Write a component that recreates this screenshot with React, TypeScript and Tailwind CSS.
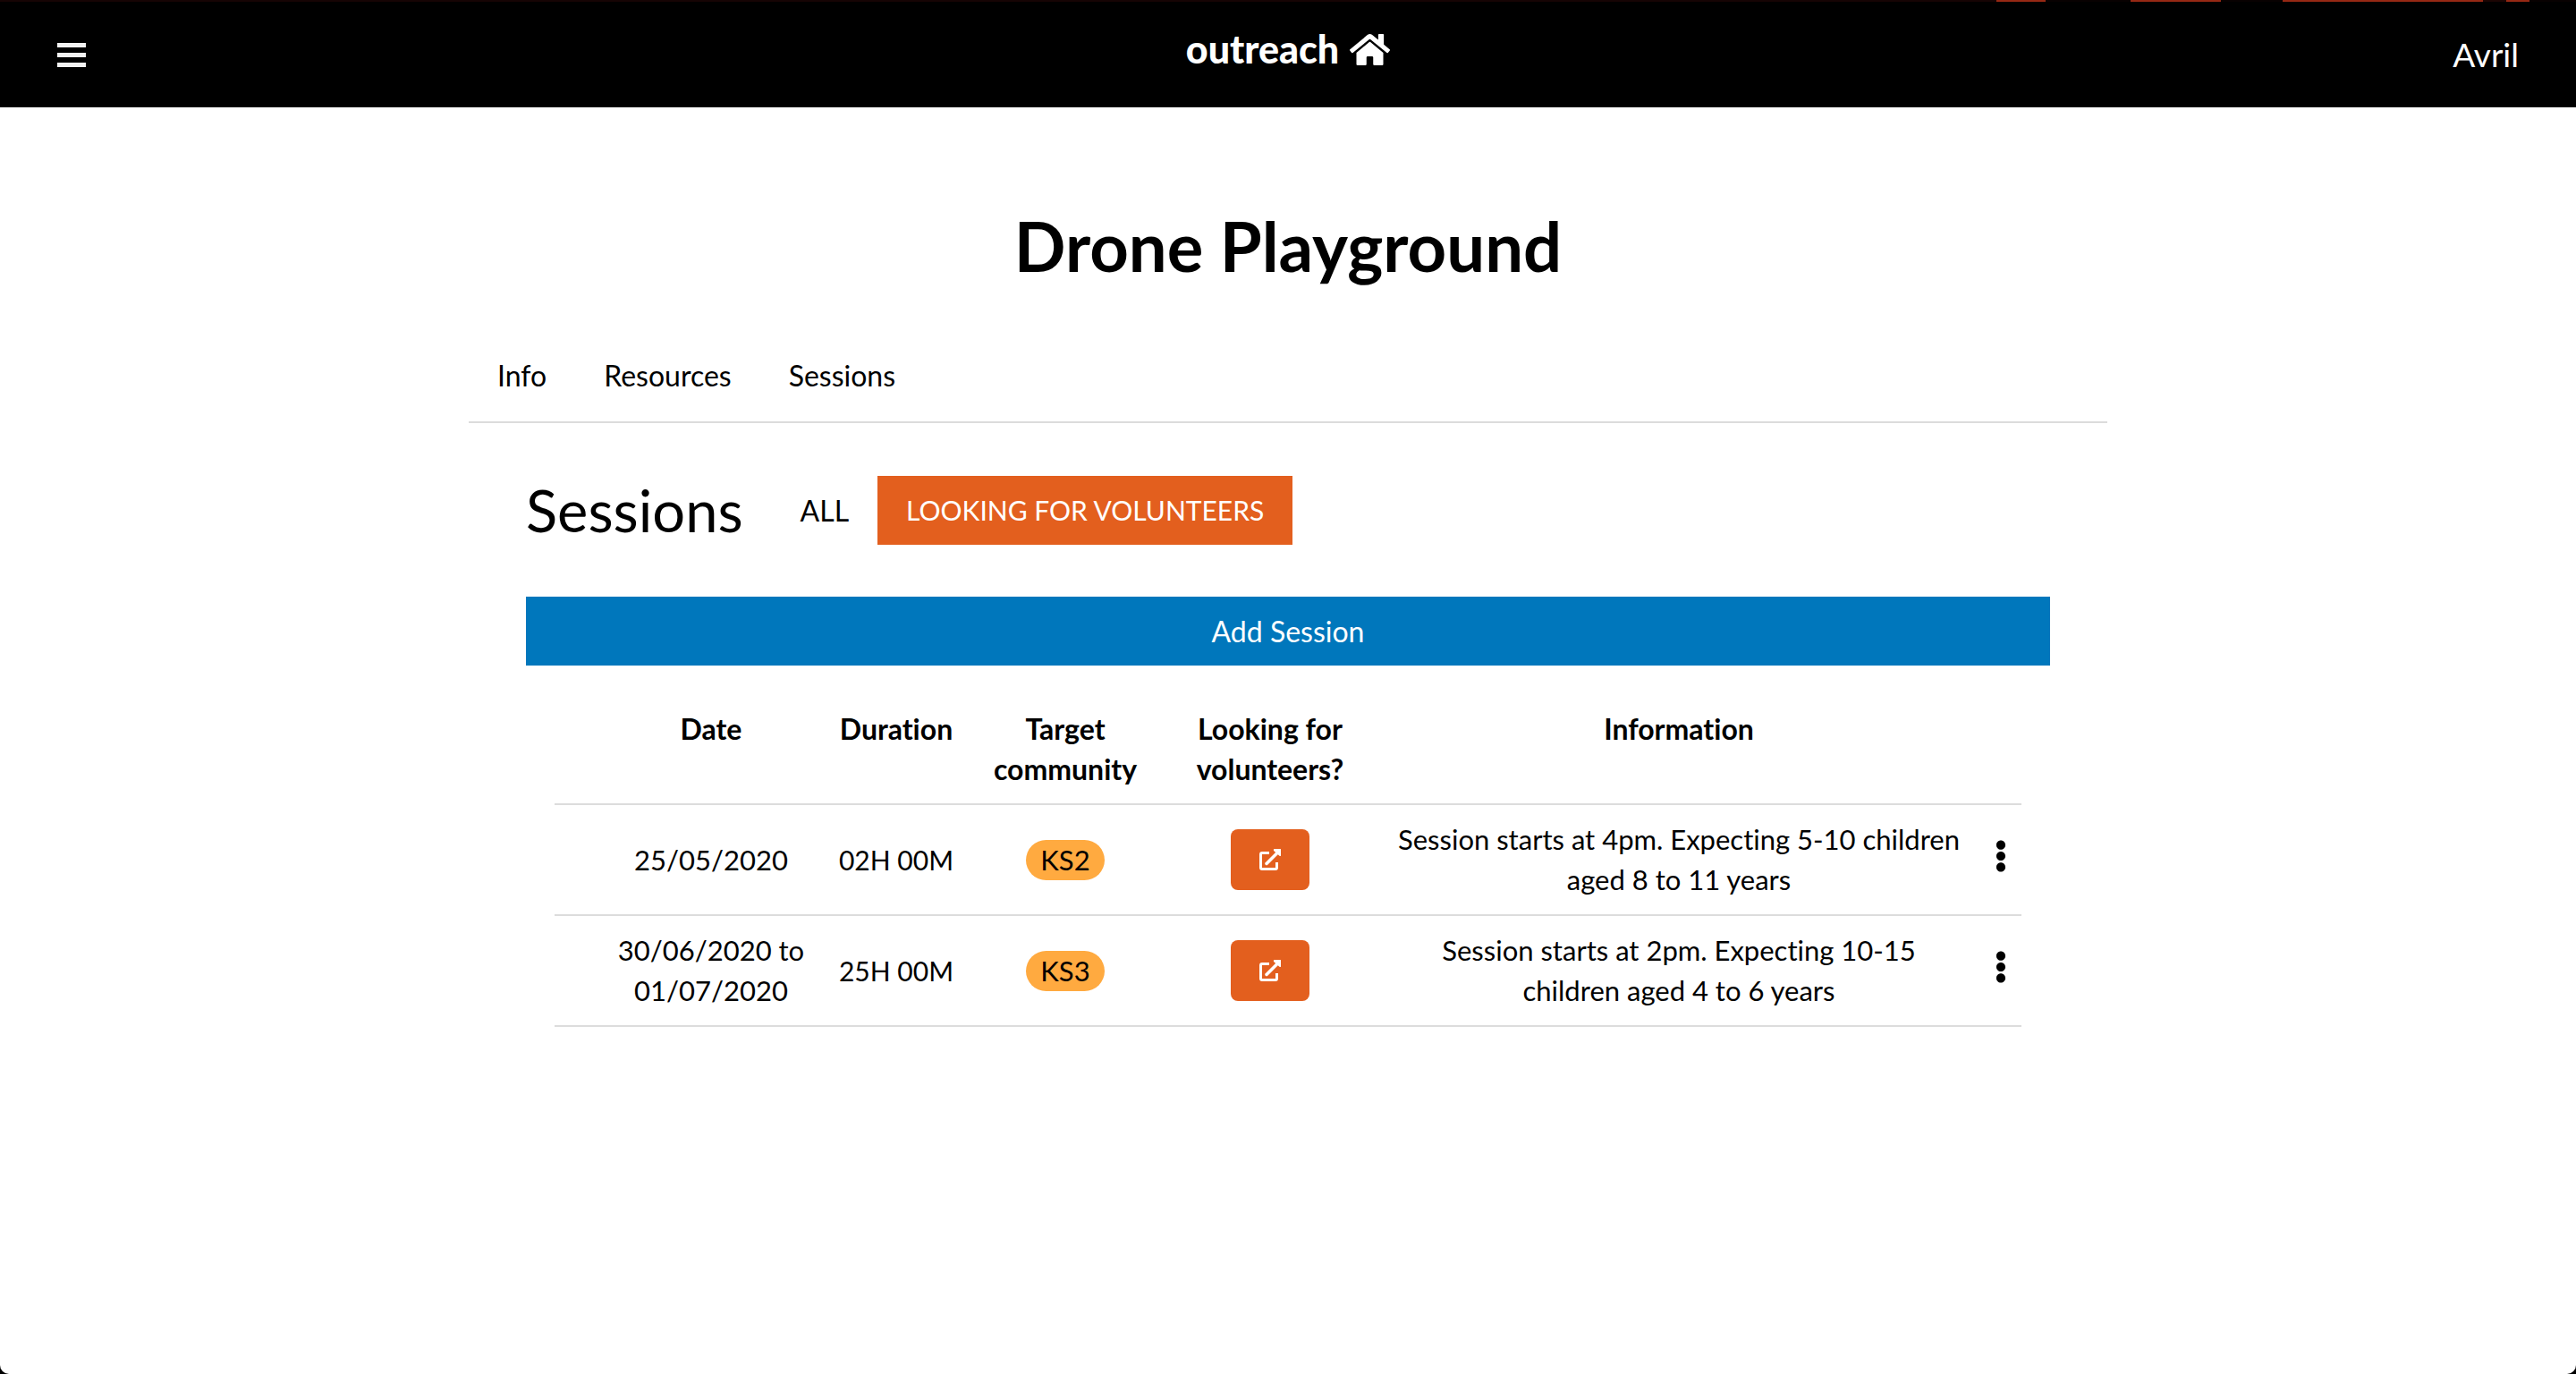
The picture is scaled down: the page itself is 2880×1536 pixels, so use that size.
import { FaHome, FaEllipsisV } from "react-icons/fa";

const sessions = [
  { date: "25/05/2020", duration: "02H 00M", target: "KS2", info: "Session starts at 4pm. Expecting 5-10 children aged 8 to 11 years" },
  { date: "30/06/2020 to 01/07/2020", duration: "25H 00M", target: "KS3", info: "Session starts at 2pm. Expecting 10-15 children aged 4 to 6 years" },
];

function OpenIcon() {
  return (
    <svg viewBox="0 0 24 24" className="size-6" fill="none" stroke="currentColor" strokeWidth="3" aria-hidden="true">
      <path d="M11 4.5H3Q1.5 4.5 1.5 6v15Q1.5 22.500 3 22.500h15q1.500 0 1.500-1.500v-6" />
      <path d="M8 16.500 20 4.500" strokeWidth="3.500" strokeLinecap="round" />
      <path d="M16.500 0H23.500Q24 0 24 .5V7.500q-.5 1-1.500.2L16 2Q15.500.5 16.500 0Z" fill="currentColor" stroke="none" />
    </svg>
  );
}

function Header() {
  return (
    <header>
      <div className="h-[2px] bg-[linear-gradient(to_right,#160404_77.5%,#962814_77.5%_79.4%,#080101_79.4%_82.7%,#962814_82.7%_86.2%,#080101_86.2%_88.6%,#962814_88.6%_96.4%,#1c0503_96.4%_97.3%,#962814_97.3%_98.2%,#080101_98.2%)]" />
      <div className="grid h-[118px] grid-cols-3 items-center bg-black px-16 text-white">
        <button type="button" aria-label="Open menu" className="flex w-8 flex-col gap-[6px] justify-self-start">
          <span className="h-[5px] w-full bg-[#f2f2f2]" />
          <span className="h-[5px] w-full bg-[#f2f2f2]" />
          <span className="h-[5px] w-full bg-[#f2f2f2]" />
        </button>
        <a href="#home" className="mb-3 flex items-center gap-3 justify-self-center text-[43px] leading-[60px] font-black">
          outreach
          <FaHome className="size-[45px]" aria-hidden="true" />
        </a>
        <a href="#account" className="justify-self-end text-[37px] leading-[54px]">Avril</a>
      </div>
    </header>
  );
}

function SessionsTable() {
  return (
    <table className="w-full table-fixed text-center text-[31px] leading-[45px]">
      <colgroup>
        <col className="w-[48px]" />
        <col className="w-[254px]" />
        <col className="w-[160px]" />
        <col className="w-[218px]" />
        <col className="w-[240px]" />
        <col />
        <col className="w-[46px]" />
      </colgroup>
      <thead className="text-[32px] leading-[45px]">
        <tr className="border-b-2 border-[#dcdcdc] align-top">
          <td />
          <th scope="col" className="py-4">Date</th>
          <th scope="col" className="py-4">Duration</th>
          <th scope="col" className="py-4">Target community</th>
          <th scope="col" className="px-4 py-4">Looking for volunteers?</th>
          <th scope="col" className="py-4">Information</th>
          <td />
        </tr>
      </thead>
      <tbody>
        {sessions.map((s) => (
          <tr key={s.date} className="border-b-2 border-[#dcdcdc]">
            <td />
            <td className="px-4 py-4">{s.date}</td>
            <td className="text-[30px] leading-[45px]">{s.duration}</td>
            <td className="py-4">
              <span className="inline-block rounded-3xl bg-[#ffaa40] px-4">{s.target}</span>
            </td>
            <td className="py-4">
              <a href="#volunteer" aria-label="Volunteer for this session" className="inline-flex h-[68px] w-[88px] items-center justify-center rounded-lg bg-[#e35f1e] align-middle text-white">
                <OpenIcon />
              </a>
            </td>
            <td className="px-4 py-4">{s.info}</td>
            <td>
              <button type="button" aria-label="Session options" className="mx-auto mb-2 block">
                <FaEllipsisV className="size-9" />
              </button>
            </td>
          </tr>
        ))}
      </tbody>
    </table>
  );
}

export default function App() {
  return (
    <div className="bg-black">
      <div className="min-h-screen rounded-b-[10px] bg-white font-['Lato',sans-serif] text-[32px] leading-[45px] text-black [font-variant-ligatures:none]">
        <Header />
        <main className="mx-auto max-w-[1832px] pt-[101px]">
          <h1 className="text-center text-[76px] leading-[108px] font-bold">Drone Playground</h1>
          <nav className="mt-[52px] flex border-b-2 border-[#dcdcdc] pb-[13px]">
            <a href="#info" className="px-8 py-4">Info</a>
            <a href="#resources" className="px-8 py-4">Resources</a>
            <a href="#sessions" className="px-8 py-4">Sessions</a>
          </nav>
          <section className="px-16 pt-[52px]">
            <div className="flex items-center">
              <h2 className="mr-8 text-[65px] leading-[90px]">Sessions</h2>
              <button type="button" className="px-8 py-4">ALL</button>
              <button type="button" className="bg-[#e35f1e] px-8 py-4 text-[30px] leading-[45px] text-white">LOOKING FOR VOLUNTEERS</button>
            </div>
            <button type="button" className="mt-[52px] w-full bg-[#0077bc] py-4 text-white">Add Session</button>
            <div className="p-8">
              <SessionsTable />
            </div>
          </section>
        </main>
      </div>
    </div>
  );
}
